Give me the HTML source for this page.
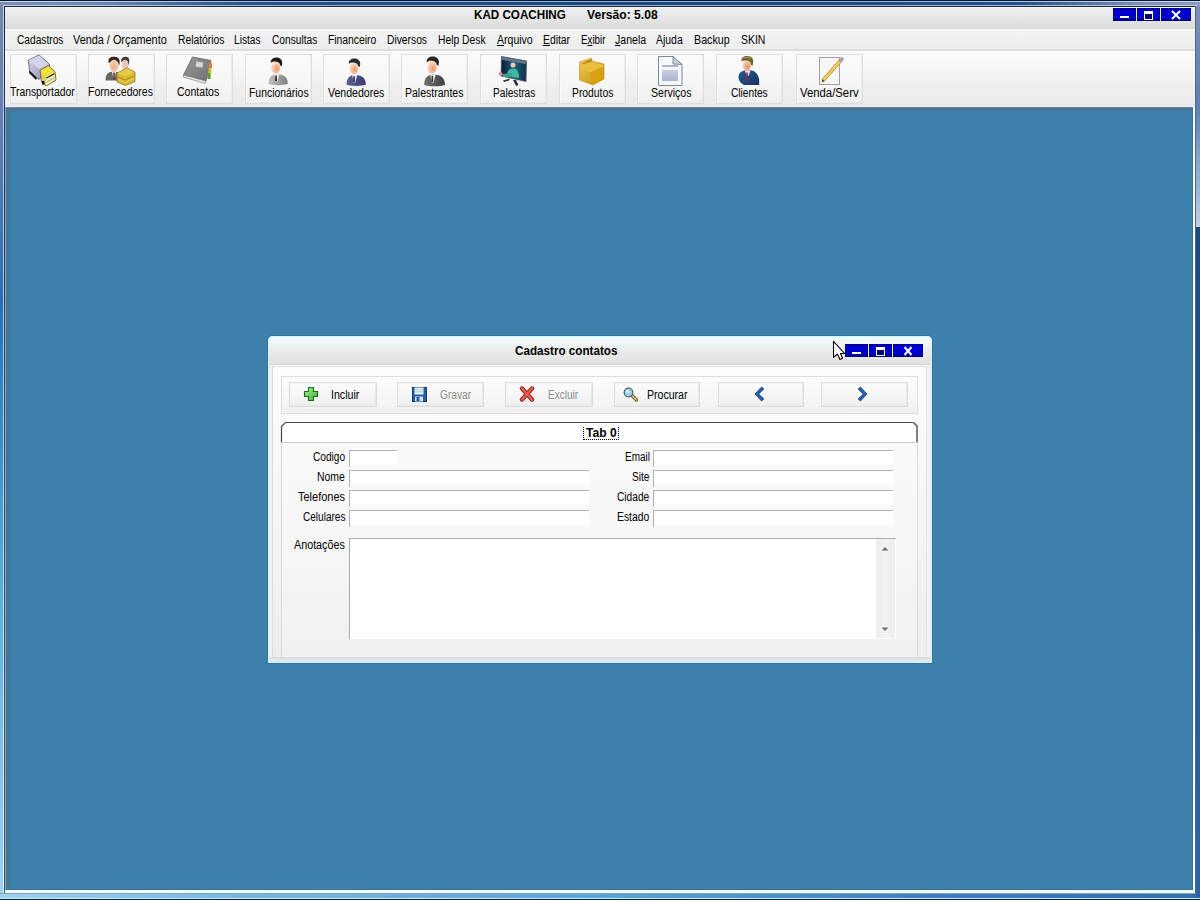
<!DOCTYPE html>
<html><head><meta charset="utf-8">
<style>
*{margin:0;padding:0;box-sizing:border-box}
html,body{width:1200px;height:900px;overflow:hidden;background:#3d80ac;font-family:"Liberation Sans",sans-serif;color:#000}
.a{position:absolute}
.t{position:absolute;white-space:nowrap;font-size:12px;line-height:12px;transform-origin:0 0}
.b{font-weight:bold}
</style></head><body>

<!-- outer window frame -->
<div class="a" style="left:0;top:0;width:1200px;height:900px;background:linear-gradient(90deg,#7d90b0 0,#6f88b0 8%,#2a5488 20%,#1e4878 50%,#24508a 85%,#7d90b0 95%,#8aa0c0 100%)"></div>
<div class="a" style="left:0;top:0;width:1200px;height:1px;background:#0a1a36"></div>
<div class="a" style="left:0;top:1px;width:1200px;height:1px;background:linear-gradient(90deg,#c8d8ee,#90b0d8 30%,#90b0d8 70%,#c8d8ee)"></div>
<div class="a" style="left:3px;top:5px;width:1194px;height:1px;background:linear-gradient(90deg,#c0d0e8,#90b0d8 30%,#90b0d8 70%,#c0d0e8)"></div>
<div class="a" style="left:4px;top:6px;width:1192px;height:1px;background:#1a2838"></div>
<!-- left frame -->
<div class="a" style="left:0;top:6px;width:3px;height:888px;background:linear-gradient(180deg,#7a88a8 0,#6a80b0 12%,#2a70b0 33%,#4090c8 50%,#60b0d8 67%,#90c8f0 92%,#a0d0f0 100%)"></div>
<div class="a" style="left:3px;top:6px;width:1px;height:888px;background:linear-gradient(180deg,#c0d0e8,#a0c8f0 33%,#b0e0f8 67%,#e0f8ff)"></div>
<div class="a" style="left:4px;top:6px;width:1px;height:888px;background:linear-gradient(180deg,#1a2a44,#204060 33%,#305870 67%,#405060)"></div>
<!-- right frame -->
<div class="a" style="left:1195px;top:6px;width:1px;height:888px;background:#586878"></div>
<div class="a" style="left:1196px;top:6px;width:4px;height:221px;background:linear-gradient(180deg,#7a90b8,#5a80b8 45%,#a0b8d8 85%,#c0d0e0)"></div>
<div class="a" style="left:1196px;top:227px;width:4px;height:673px;background:linear-gradient(180deg,#1a4a80,#2a64a8)"></div>
<!-- bottom frame -->
<div class="a" style="left:0;top:893px;width:1196px;height:1px;background:#8aa0b8"></div>
<div class="a" style="left:0;top:894px;width:1196px;height:4px;background:linear-gradient(90deg,#a0d0f0,#78b8e0 20%,#5aa4d8 50%,#3a7cc0 80%,#3070b0)"></div>
<div class="a" style="left:0;top:898px;width:1200px;height:1px;background:#c8ecff"></div>
<div class="a" style="left:0;top:899px;width:1200px;height:1px;background:#0a2030"></div>

<!-- title bar -->
<div class="a" style="left:5px;top:7px;width:1190px;height:22px;background:linear-gradient(180deg,#f8faff 0,#eeeeee 8%,#e6e6e6 50%,#dcdcdc 90%,#dcdcdc 100%)"></div>

<!-- menu bar -->
<div class="a" style="left:5px;top:29px;width:1190px;height:20px;background:linear-gradient(180deg,#f6f6f6,#f2f2f2 15%,#eeeeee)"></div>
<div class="a" style="left:5px;top:49px;width:1190px;height:2px;background:#dcdcdc"></div>

<!-- toolbar -->
<div class="a" style="left:5px;top:51px;width:1190px;height:53px;background:linear-gradient(180deg,#fbfbfb,#f6f6f6 35%,#eeeeee 70%,#ececec)"></div>
<div class="a" style="left:5px;top:104px;width:1190px;height:1px;background:#e8e8ea"></div>
<div class="a" style="left:5px;top:105px;width:1190px;height:2px;background:#ebebf5"></div>

<!-- MDI client -->
<div class="a" style="left:5px;top:107px;width:1188px;height:1px;background:#7088a0"></div>
<div class="a" style="left:5px;top:108px;width:1188px;height:1px;background:#50708a"></div>
<div class="a" style="left:6px;top:109px;width:1187px;height:781px;background:#3d80ac"></div>
<div class="a" style="left:6px;top:109px;width:1187px;height:3px;background:linear-gradient(180deg,#4a7090,rgba(61,128,172,0))"></div>
<div class="a" style="left:6px;top:109px;width:5px;height:781px;background:linear-gradient(90deg,#487090,rgba(58,128,176,0))"></div>
<div class="a" style="left:5px;top:107px;width:1px;height:786px;background:#88a8c0"></div>
<div class="a" style="left:1192px;top:109px;width:1px;height:781px;background:#4a6a88"></div>
<div class="a" style="left:1193px;top:107px;width:2px;height:786px;background:#e8ffff"></div>
<div class="a" style="left:6px;top:889px;width:1187px;height:1px;background:#4a6a88"></div>
<div class="a" style="left:5px;top:890px;width:1190px;height:3px;background:#e8ffff"></div>

<div class="a" style="left:10px;top:54px;width:67px;height:50px;border:1px solid #dedede;background:linear-gradient(180deg,#fbfbfb,#f6f6f6 60%,#f0f0f0)"></div>
<div class="a" style="left:11px;top:55px;width:65px;height:48px;border:1px solid #f8f8f8;border-right-color:#ececec;border-bottom-color:#ececec"></div>
<div class="a" style="left:88px;top:54px;width:67px;height:50px;border:1px solid #dedede;background:linear-gradient(180deg,#fbfbfb,#f6f6f6 60%,#f0f0f0)"></div>
<div class="a" style="left:89px;top:55px;width:65px;height:48px;border:1px solid #f8f8f8;border-right-color:#ececec;border-bottom-color:#ececec"></div>
<div class="a" style="left:166px;top:54px;width:67px;height:50px;border:1px solid #dedede;background:linear-gradient(180deg,#fbfbfb,#f6f6f6 60%,#f0f0f0)"></div>
<div class="a" style="left:167px;top:55px;width:65px;height:48px;border:1px solid #f8f8f8;border-right-color:#ececec;border-bottom-color:#ececec"></div>
<div class="a" style="left:245px;top:54px;width:67px;height:50px;border:1px solid #dedede;background:linear-gradient(180deg,#fbfbfb,#f6f6f6 60%,#f0f0f0)"></div>
<div class="a" style="left:246px;top:55px;width:65px;height:48px;border:1px solid #f8f8f8;border-right-color:#ececec;border-bottom-color:#ececec"></div>
<div class="a" style="left:323px;top:54px;width:67px;height:50px;border:1px solid #dedede;background:linear-gradient(180deg,#fbfbfb,#f6f6f6 60%,#f0f0f0)"></div>
<div class="a" style="left:324px;top:55px;width:65px;height:48px;border:1px solid #f8f8f8;border-right-color:#ececec;border-bottom-color:#ececec"></div>
<div class="a" style="left:401px;top:54px;width:67px;height:50px;border:1px solid #dedede;background:linear-gradient(180deg,#fbfbfb,#f6f6f6 60%,#f0f0f0)"></div>
<div class="a" style="left:402px;top:55px;width:65px;height:48px;border:1px solid #f8f8f8;border-right-color:#ececec;border-bottom-color:#ececec"></div>
<div class="a" style="left:480px;top:54px;width:67px;height:50px;border:1px solid #dedede;background:linear-gradient(180deg,#fbfbfb,#f6f6f6 60%,#f0f0f0)"></div>
<div class="a" style="left:481px;top:55px;width:65px;height:48px;border:1px solid #f8f8f8;border-right-color:#ececec;border-bottom-color:#ececec"></div>
<div class="a" style="left:559px;top:54px;width:67px;height:50px;border:1px solid #dedede;background:linear-gradient(180deg,#fbfbfb,#f6f6f6 60%,#f0f0f0)"></div>
<div class="a" style="left:560px;top:55px;width:65px;height:48px;border:1px solid #f8f8f8;border-right-color:#ececec;border-bottom-color:#ececec"></div>
<div class="a" style="left:637px;top:54px;width:67px;height:50px;border:1px solid #dedede;background:linear-gradient(180deg,#fbfbfb,#f6f6f6 60%,#f0f0f0)"></div>
<div class="a" style="left:638px;top:55px;width:65px;height:48px;border:1px solid #f8f8f8;border-right-color:#ececec;border-bottom-color:#ececec"></div>
<div class="a" style="left:716px;top:54px;width:67px;height:50px;border:1px solid #dedede;background:linear-gradient(180deg,#fbfbfb,#f6f6f6 60%,#f0f0f0)"></div>
<div class="a" style="left:717px;top:55px;width:65px;height:48px;border:1px solid #f8f8f8;border-right-color:#ececec;border-bottom-color:#ececec"></div>
<div class="a" style="left:796px;top:54px;width:67px;height:50px;border:1px solid #dedede;background:linear-gradient(180deg,#fbfbfb,#f6f6f6 60%,#f0f0f0)"></div>
<div class="a" style="left:797px;top:55px;width:65px;height:48px;border:1px solid #f8f8f8;border-right-color:#ececec;border-bottom-color:#ececec"></div>
<svg class="a" style="left:24px;top:52px" width="40" height="36" viewBox="0 0 40 36"><defs>
<linearGradient id="gbox" x1="0" y1="0" x2="1" y2="1"><stop offset="0" stop-color="#d8d8f0"/><stop offset="1" stop-color="#9090b0"/></linearGradient>
<linearGradient id="gyel" x1="0" y1="0" x2="0" y2="1"><stop offset="0" stop-color="#f0e040"/><stop offset="1" stop-color="#e8d890"/></linearGradient>
<linearGradient id="gbook" x1="0" y1="0" x2="1" y2="1"><stop offset="0" stop-color="#9a9a9a"/><stop offset="1" stop-color="#707070"/></linearGradient>
<radialGradient id="gface" cx="0.5" cy="0.6" r="0.6"><stop offset="0" stop-color="#f8a878"/><stop offset="1" stop-color="#f0d8c0"/></radialGradient>
<linearGradient id="gmon" x1="0" y1="0" x2="1" y2="0"><stop offset="0" stop-color="#081830"/><stop offset="0.5" stop-color="#206080"/><stop offset="1" stop-color="#103048"/></linearGradient>
<linearGradient id="gprod" x1="0" y1="0" x2="1" y2="1"><stop offset="0" stop-color="#f0c850"/><stop offset="1" stop-color="#c09010"/></linearGradient>
<linearGradient id="gdoc" x1="0" y1="0" x2="0" y2="1"><stop offset="0" stop-color="#c8d0e0"/><stop offset="1" stop-color="#a8b4d0"/></linearGradient>
</defs>
<polygon points="4.5,8 15,3 25.5,12 25.5,16 15,27.5 5.5,19.5" fill="url(#gbox)" stroke="#505868" stroke-width="0.8"/>
<polygon points="5,8.2 15,3.6 24.8,12.2 15,17" fill="#d4d4ea"/>
<polygon points="5.5,18.5 13,26 12,28 5,21" fill="#181818"/>
<polygon points="16,18.5 24.5,13.5 31,20 32,28 22,34 17.5,30" fill="#e0d060" stroke="#605010" stroke-width="0.8"/>
<polygon points="16.6,18.6 24.5,14.2 30.4,20 21.5,25" fill="#f0e438"/>
<polygon points="21.5,25 30.5,20.2 31.4,27.6 22,33.4" fill="#f2eeb8"/>
<line x1="22" y1="26.2" x2="30.6" y2="21.6" stroke="#303020" stroke-width="1.3"/>
<line x1="22.5" y1="30" x2="31" y2="25.5" stroke="#a8a060" stroke-width="0.9"/>
<rect x="18" y="29" width="2.5" height="3.5" fill="#101010"/></svg>
<svg class="a" style="left:100px;top:52px" width="40" height="36" viewBox="0 0 40 36"><defs>
<linearGradient id="gbox" x1="0" y1="0" x2="1" y2="1"><stop offset="0" stop-color="#d8d8f0"/><stop offset="1" stop-color="#9090b0"/></linearGradient>
<linearGradient id="gyel" x1="0" y1="0" x2="0" y2="1"><stop offset="0" stop-color="#f0e040"/><stop offset="1" stop-color="#e8d890"/></linearGradient>
<linearGradient id="gbook" x1="0" y1="0" x2="1" y2="1"><stop offset="0" stop-color="#9a9a9a"/><stop offset="1" stop-color="#707070"/></linearGradient>
<radialGradient id="gface" cx="0.5" cy="0.6" r="0.6"><stop offset="0" stop-color="#f8a878"/><stop offset="1" stop-color="#f0d8c0"/></radialGradient>
<linearGradient id="gmon" x1="0" y1="0" x2="1" y2="0"><stop offset="0" stop-color="#081830"/><stop offset="0.5" stop-color="#206080"/><stop offset="1" stop-color="#103048"/></linearGradient>
<linearGradient id="gprod" x1="0" y1="0" x2="1" y2="1"><stop offset="0" stop-color="#f0c850"/><stop offset="1" stop-color="#c09010"/></linearGradient>
<linearGradient id="gdoc" x1="0" y1="0" x2="0" y2="1"><stop offset="0" stop-color="#c8d0e0"/><stop offset="1" stop-color="#a8b4d0"/></linearGradient>
</defs>
<path d="M21,9.5 C21,5.5 24,4.8 26,4.8 C28.5,5 29.8,7 29.2,10.5 L28.6,13.5 L27.6,9.5 L22,9.5 Z" fill="#403830"/>
<ellipse cx="25" cy="12.8" rx="3.5" ry="5" fill="#e8c8b8"/>
<rect x="23.5" y="17" width="3" height="4" fill="#f0e0e0"/>
<rect x="24.5" y="17.5" width="1.2" height="3" fill="#801830"/>
<path d="M8.5,10.5 C8,6 11,4.5 14.5,4.8 C18,5 20.2,7 19.6,11 L19,14.5 L18,10.2 C16,9.2 12,9.2 9,10.8 Z" fill="#302820"/>
<ellipse cx="14" cy="13.8" rx="4.6" ry="6" fill="url(#gface)"/>
<path d="M5.5,28.5 C5.5,22.5 8,19.8 12,19.8 L16,19.8 C18.5,20.2 19.5,22 19.5,24 L18.5,28.5 Z" fill="#6a6a62"/>
<polygon points="12,19.8 16,19.8 14.8,26 13.2,26" fill="#f4f4f0"/>
<rect x="13.3" y="20.5" width="1.4" height="7" fill="#601020"/>
<polygon points="17,21 27,16 35,20 35,29.5 25.5,33.5 17,30" fill="#d8b830" stroke="#8a6a10" stroke-width="0.7"/>
<polygon points="17.5,21.2 27,16.6 34.4,20.2 25,24.6" fill="#e8cc48"/>
<polyline points="18,25 25,28 34.5,24" fill="none" stroke="#a88010" stroke-width="0.8"/>
<polyline points="18,27.5 25,30.5 34.5,26.5" fill="none" stroke="#f0d860" stroke-width="0.8"/></svg>
<svg class="a" style="left:178px;top:52px" width="40" height="36" viewBox="0 0 40 36"><defs>
<linearGradient id="gbox" x1="0" y1="0" x2="1" y2="1"><stop offset="0" stop-color="#d8d8f0"/><stop offset="1" stop-color="#9090b0"/></linearGradient>
<linearGradient id="gyel" x1="0" y1="0" x2="0" y2="1"><stop offset="0" stop-color="#f0e040"/><stop offset="1" stop-color="#e8d890"/></linearGradient>
<linearGradient id="gbook" x1="0" y1="0" x2="1" y2="1"><stop offset="0" stop-color="#9a9a9a"/><stop offset="1" stop-color="#707070"/></linearGradient>
<radialGradient id="gface" cx="0.5" cy="0.6" r="0.6"><stop offset="0" stop-color="#f8a878"/><stop offset="1" stop-color="#f0d8c0"/></radialGradient>
<linearGradient id="gmon" x1="0" y1="0" x2="1" y2="0"><stop offset="0" stop-color="#081830"/><stop offset="0.5" stop-color="#206080"/><stop offset="1" stop-color="#103048"/></linearGradient>
<linearGradient id="gprod" x1="0" y1="0" x2="1" y2="1"><stop offset="0" stop-color="#f0c850"/><stop offset="1" stop-color="#c09010"/></linearGradient>
<linearGradient id="gdoc" x1="0" y1="0" x2="0" y2="1"><stop offset="0" stop-color="#c8d0e0"/><stop offset="1" stop-color="#a8b4d0"/></linearGradient>
</defs>
<polygon points="14.5,5 33,8.5 28,29 5.5,23" fill="url(#gbook)" stroke="#606060" stroke-width="0.8"/>
<polygon points="5.5,23 28,29 27.5,31.5 5,25" fill="#e8e8e8" stroke="#707070" stroke-width="0.6"/>
<rect x="18" y="10" width="7" height="5" fill="#d8d8d0" transform="rotate(10 21 12)"/>
<rect x="31" y="11" width="3" height="5" fill="#e08040"/>
<rect x="30.5" y="16" width="3" height="5" fill="#d8c030"/>
<rect x="29.5" y="21" width="3" height="6" fill="#50a030"/></svg>
<svg class="a" style="left:258px;top:52px" width="40" height="36" viewBox="0 0 40 36"><defs><radialGradient id="p1f" cx="0.6" cy="0.65" r="0.65"><stop offset="0" stop-color="#f09868"/><stop offset="0.6" stop-color="#f4c8a8"/><stop offset="1" stop-color="#f8ece0"/></radialGradient>
<linearGradient id="p1s" x1="0" y1="0" x2="1" y2="0"><stop offset="0" stop-color="#c0c0c0"/><stop offset="1" stop-color="#808080"/></linearGradient></defs>
<g transform="translate(0,0) scale(1)">
<path d="M10.5,32 C10.5,25.5 13.5,22.2 19,22.2 C25.5,22.2 29.8,25 29.8,32 C25,33.5 15,33.5 10.5,32 Z" fill="url(#p1s)"/>
<polygon points="16.2,22.2 21.2,22.2 19.2,30 17.6,30" fill="#f0f0f0"/>
<polygon points="17.4,23.4 18.8,23.4 18.9,29.5 17.2,29" fill="#101010"/>
<ellipse cx="17.8" cy="15.2" rx="4.6" ry="6.3" fill="url(#p1f)"/>
<path d="M12.8,11 C12.6,7 15.5,5.6 18.6,5.6 C22.2,5.6 24.4,8 24.2,11.5 L23.6,14.5 L22.2,13.2 C21.8,10.8 20,9.6 17,9.6 C15,9.6 13.8,10.2 12.8,11 Z" fill="#1a1a1a"/>
</g></svg>
<svg class="a" style="left:336px;top:52px" width="40" height="36" viewBox="0 0 40 36"><defs><radialGradient id="p2f" cx="0.6" cy="0.65" r="0.65"><stop offset="0" stop-color="#f09868"/><stop offset="0.6" stop-color="#f4c8a8"/><stop offset="1" stop-color="#f8ece0"/></radialGradient>
<linearGradient id="p2s" x1="0" y1="0" x2="1" y2="0"><stop offset="0" stop-color="#5a6098"/><stop offset="1" stop-color="#383e70"/></linearGradient></defs>
<g transform="translate(0,0.8) scale(1)">
<path d="M10.5,32 C10.5,25.5 13.5,22.2 19,22.2 C25.5,22.2 29.8,25 29.8,32 C25,33.5 15,33.5 10.5,32 Z" fill="url(#p2s)"/>
<polygon points="16.2,22.2 21.2,22.2 19.2,30 17.6,30" fill="#e8e8f0"/>
<polygon points="17.4,23.4 18.8,23.4 18.9,29.5 17.2,29" fill="#1a2048"/>
<ellipse cx="17.8" cy="15.2" rx="4.6" ry="6.3" fill="url(#p2f)"/>
<path d="M12.8,11 C12.6,7 15.5,5.6 18.6,5.6 C22.2,5.6 24.4,8 24.2,11.5 L23.6,14.5 L22.2,13.2 C21.8,10.8 20,9.6 17,9.6 C15,9.6 13.8,10.2 12.8,11 Z" fill="#2a2a2e"/>
</g></svg>
<svg class="a" style="left:414px;top:52px" width="40" height="36" viewBox="0 0 40 36"><defs><radialGradient id="p3f" cx="0.6" cy="0.65" r="0.65"><stop offset="0" stop-color="#f09868"/><stop offset="0.6" stop-color="#f4c8a8"/><stop offset="1" stop-color="#f8ece0"/></radialGradient>
<linearGradient id="p3s" x1="0" y1="0" x2="1" y2="0"><stop offset="0" stop-color="#707070"/><stop offset="1" stop-color="#404040"/></linearGradient></defs>
<g transform="translate(-1.2,-1.6) scale(1.08)">
<path d="M10.5,32 C10.5,25.5 13.5,22.2 19,22.2 C25.5,22.2 29.8,25 29.8,32 C25,33.5 15,33.5 10.5,32 Z" fill="url(#p3s)"/>
<polygon points="16.2,22.2 21.2,22.2 19.2,30 17.6,30" fill="#f0f0f0"/>
<polygon points="17.4,23.4 18.8,23.4 18.9,29.5 17.2,29" fill="#303030"/>
<ellipse cx="17.8" cy="15.2" rx="4.6" ry="6.3" fill="url(#p3f)"/>
<path d="M12.8,11 C12.6,7 15.5,5.6 18.6,5.6 C22.2,5.6 24.4,8 24.2,11.5 L23.6,14.5 L22.2,13.2 C21.8,10.8 20,9.6 17,9.6 C15,9.6 13.8,10.2 12.8,11 Z" fill="#262626"/>
</g></svg>
<svg class="a" style="left:493px;top:52px" width="40" height="36" viewBox="0 0 40 36"><defs>
<linearGradient id="gbox" x1="0" y1="0" x2="1" y2="1"><stop offset="0" stop-color="#d8d8f0"/><stop offset="1" stop-color="#9090b0"/></linearGradient>
<linearGradient id="gyel" x1="0" y1="0" x2="0" y2="1"><stop offset="0" stop-color="#f0e040"/><stop offset="1" stop-color="#e8d890"/></linearGradient>
<linearGradient id="gbook" x1="0" y1="0" x2="1" y2="1"><stop offset="0" stop-color="#9a9a9a"/><stop offset="1" stop-color="#707070"/></linearGradient>
<radialGradient id="gface" cx="0.5" cy="0.6" r="0.6"><stop offset="0" stop-color="#f8a878"/><stop offset="1" stop-color="#f0d8c0"/></radialGradient>
<linearGradient id="gmon" x1="0" y1="0" x2="1" y2="0"><stop offset="0" stop-color="#081830"/><stop offset="0.5" stop-color="#206080"/><stop offset="1" stop-color="#103048"/></linearGradient>
<linearGradient id="gprod" x1="0" y1="0" x2="1" y2="1"><stop offset="0" stop-color="#f0c850"/><stop offset="1" stop-color="#c09010"/></linearGradient>
<linearGradient id="gdoc" x1="0" y1="0" x2="0" y2="1"><stop offset="0" stop-color="#c8d0e0"/><stop offset="1" stop-color="#a8b4d0"/></linearGradient>
</defs>
<polygon points="8.5,4.5 33.5,9 33,29.5 8,24" fill="url(#gmon)" stroke="#505860" stroke-width="0.8"/>
<polygon points="9,5 33,9.5 33,12 9,8" fill="#607888"/>
<ellipse cx="20" cy="13" rx="2.5" ry="2.5" fill="#f0c8a8"/>
<path d="M14,24 C14,19 16,16.5 20,16.5 C24,16.5 26,19 26,26 L19,25 Z" fill="#40b8a0"/>
<path d="M9,22 L19,21 L19,25 L10,25 Z" fill="#30a090"/>
<ellipse cx="7.5" cy="22" rx="2" ry="2" fill="#e090a0"/>
<polygon points="10,28.5 17,26.5 16,28.5 11,30" fill="#303030"/>
<polygon points="20,28 23,28 25.5,33 23,34" fill="#303030"/></svg>
<svg class="a" style="left:572px;top:52px" width="40" height="36" viewBox="0 0 40 36"><defs>
<linearGradient id="gbox" x1="0" y1="0" x2="1" y2="1"><stop offset="0" stop-color="#d8d8f0"/><stop offset="1" stop-color="#9090b0"/></linearGradient>
<linearGradient id="gyel" x1="0" y1="0" x2="0" y2="1"><stop offset="0" stop-color="#f0e040"/><stop offset="1" stop-color="#e8d890"/></linearGradient>
<linearGradient id="gbook" x1="0" y1="0" x2="1" y2="1"><stop offset="0" stop-color="#9a9a9a"/><stop offset="1" stop-color="#707070"/></linearGradient>
<radialGradient id="gface" cx="0.5" cy="0.6" r="0.6"><stop offset="0" stop-color="#f8a878"/><stop offset="1" stop-color="#f0d8c0"/></radialGradient>
<linearGradient id="gmon" x1="0" y1="0" x2="1" y2="0"><stop offset="0" stop-color="#081830"/><stop offset="0.5" stop-color="#206080"/><stop offset="1" stop-color="#103048"/></linearGradient>
<linearGradient id="gprod" x1="0" y1="0" x2="1" y2="1"><stop offset="0" stop-color="#f0c850"/><stop offset="1" stop-color="#c09010"/></linearGradient>
<linearGradient id="gdoc" x1="0" y1="0" x2="0" y2="1"><stop offset="0" stop-color="#c8d0e0"/><stop offset="1" stop-color="#a8b4d0"/></linearGradient>
</defs>
<polygon points="7.5,10 19.5,6 20,9 32,12 32,27 21,33 7.5,28" fill="url(#gprod)" stroke="#c09020" stroke-width="0.6"/>
<polygon points="9.5,12 19.5,7 19.5,12 13.5,16" fill="#b08010"/>
<polygon points="8,17 19,20 31,15 31,13 20,9.5 8,13" fill="#e8c040"/>
<polygon points="19,20 31,15 31,27 21,33" fill="#d8a010"/></svg>
<svg class="a" style="left:650px;top:52px" width="40" height="36" viewBox="0 0 40 36"><defs>
<linearGradient id="gbox" x1="0" y1="0" x2="1" y2="1"><stop offset="0" stop-color="#d8d8f0"/><stop offset="1" stop-color="#9090b0"/></linearGradient>
<linearGradient id="gyel" x1="0" y1="0" x2="0" y2="1"><stop offset="0" stop-color="#f0e040"/><stop offset="1" stop-color="#e8d890"/></linearGradient>
<linearGradient id="gbook" x1="0" y1="0" x2="1" y2="1"><stop offset="0" stop-color="#9a9a9a"/><stop offset="1" stop-color="#707070"/></linearGradient>
<radialGradient id="gface" cx="0.5" cy="0.6" r="0.6"><stop offset="0" stop-color="#f8a878"/><stop offset="1" stop-color="#f0d8c0"/></radialGradient>
<linearGradient id="gmon" x1="0" y1="0" x2="1" y2="0"><stop offset="0" stop-color="#081830"/><stop offset="0.5" stop-color="#206080"/><stop offset="1" stop-color="#103048"/></linearGradient>
<linearGradient id="gprod" x1="0" y1="0" x2="1" y2="1"><stop offset="0" stop-color="#f0c850"/><stop offset="1" stop-color="#c09010"/></linearGradient>
<linearGradient id="gdoc" x1="0" y1="0" x2="0" y2="1"><stop offset="0" stop-color="#c8d0e0"/><stop offset="1" stop-color="#a8b4d0"/></linearGradient>
</defs>
<polygon points="8.5,4.5 23,4.5 32,12.5 32,33.5 8.5,33.5" fill="#f4f8ff" stroke="#808890" stroke-width="1"/>
<polygon points="23,4.5 23,12 32,12.5" fill="#c8d0d8" stroke="#707880" stroke-width="0.8"/>
<rect x="12" y="13" width="16" height="2" fill="#b0b8c8"/>
<rect x="12" y="18" width="16" height="11" fill="url(#gdoc)"/></svg>
<svg class="a" style="left:729px;top:52px" width="40" height="36" viewBox="0 0 40 36"><defs>
<linearGradient id="gbox" x1="0" y1="0" x2="1" y2="1"><stop offset="0" stop-color="#d8d8f0"/><stop offset="1" stop-color="#9090b0"/></linearGradient>
<linearGradient id="gyel" x1="0" y1="0" x2="0" y2="1"><stop offset="0" stop-color="#f0e040"/><stop offset="1" stop-color="#e8d890"/></linearGradient>
<linearGradient id="gbook" x1="0" y1="0" x2="1" y2="1"><stop offset="0" stop-color="#9a9a9a"/><stop offset="1" stop-color="#707070"/></linearGradient>
<radialGradient id="gface" cx="0.5" cy="0.6" r="0.6"><stop offset="0" stop-color="#f8a878"/><stop offset="1" stop-color="#f0d8c0"/></radialGradient>
<linearGradient id="gmon" x1="0" y1="0" x2="1" y2="0"><stop offset="0" stop-color="#081830"/><stop offset="0.5" stop-color="#206080"/><stop offset="1" stop-color="#103048"/></linearGradient>
<linearGradient id="gprod" x1="0" y1="0" x2="1" y2="1"><stop offset="0" stop-color="#f0c850"/><stop offset="1" stop-color="#c09010"/></linearGradient>
<linearGradient id="gdoc" x1="0" y1="0" x2="0" y2="1"><stop offset="0" stop-color="#c8d0e0"/><stop offset="1" stop-color="#a8b4d0"/></linearGradient>
</defs><defs><radialGradient id="gcf" cx="0.6" cy="0.65" r="0.65"><stop offset="0" stop-color="#e89060"/><stop offset="0.6" stop-color="#f0c0a0"/><stop offset="1" stop-color="#f8e8d8"/></radialGradient>
<linearGradient id="gcs" x1="0" y1="0" x2="1" y2="1"><stop offset="0" stop-color="#2a5a98"/><stop offset="1" stop-color="#143060"/></linearGradient></defs>
<path d="M9.5,25 C9.5,20.5 13.5,18.2 17,18.5 L22,18.2 C26.5,19 29.5,22.5 30.2,28 L30.2,33 L15,33 C12,31.5 9.5,28.5 9.5,25 Z" fill="url(#gcs)"/>
<polygon points="16,18.6 21.6,18.4 19.5,24 17.5,24" fill="#f0e4ec"/>
<polygon points="17.2,20.5 18.8,20.5 19.4,29 17.4,29.5" fill="#902838"/>
<ellipse cx="17.8" cy="13" rx="4.5" ry="5.8" fill="url(#gcf)"/>
<path d="M12.4,9.5 C12,5.5 15,3.8 18.5,4 C22.5,4.2 24.6,6.5 24.2,10.5 L23.5,14 L22,12.8 C21.8,10 20,8.6 17,8.6 C15,8.6 13.6,9 12.4,9.5 Z" fill="#706434"/>
<path d="M14,6.5 C16,5 20,5 22,6.5" stroke="#a89858" stroke-width="1" fill="none"/></svg>
<svg class="a" style="left:809px;top:52px" width="40" height="36" viewBox="0 0 40 36"><defs>
<linearGradient id="gbox" x1="0" y1="0" x2="1" y2="1"><stop offset="0" stop-color="#d8d8f0"/><stop offset="1" stop-color="#9090b0"/></linearGradient>
<linearGradient id="gyel" x1="0" y1="0" x2="0" y2="1"><stop offset="0" stop-color="#f0e040"/><stop offset="1" stop-color="#e8d890"/></linearGradient>
<linearGradient id="gbook" x1="0" y1="0" x2="1" y2="1"><stop offset="0" stop-color="#9a9a9a"/><stop offset="1" stop-color="#707070"/></linearGradient>
<radialGradient id="gface" cx="0.5" cy="0.6" r="0.6"><stop offset="0" stop-color="#f8a878"/><stop offset="1" stop-color="#f0d8c0"/></radialGradient>
<linearGradient id="gmon" x1="0" y1="0" x2="1" y2="0"><stop offset="0" stop-color="#081830"/><stop offset="0.5" stop-color="#206080"/><stop offset="1" stop-color="#103048"/></linearGradient>
<linearGradient id="gprod" x1="0" y1="0" x2="1" y2="1"><stop offset="0" stop-color="#f0c850"/><stop offset="1" stop-color="#c09010"/></linearGradient>
<linearGradient id="gdoc" x1="0" y1="0" x2="0" y2="1"><stop offset="0" stop-color="#c8d0e0"/><stop offset="1" stop-color="#a8b4d0"/></linearGradient>
</defs>
<rect x="10.5" y="5.5" width="20" height="27" fill="#f6f6f8" stroke="#a0a0a0" stroke-width="1"/>
<line x1="14.5" y1="28" x2="32.5" y2="7.5" stroke="#c09030" stroke-width="3.6"/>
<line x1="14.5" y1="28" x2="32.5" y2="7.5" stroke="#f0d058" stroke-width="2.2"/>
<line x1="30.5" y1="9.8" x2="34" y2="5.8" stroke="#b0a0a8" stroke-width="3.6"/>
<polygon points="13.2,27 15.8,29.2 12.8,30.5" fill="#504030"/></svg>
<div class="a" style="left:1113px;top:8px;width:23px;height:13px;background:linear-gradient(180deg,#0000a8,#0000d8 30%,#0000c8 70%,#000090);box-shadow:inset 0 0 0 1px rgba(0,0,100,0.5)"><div class="a" style="left:7px;top:8px;width:9px;height:2px;background:#fff"></div></div>
<div class="a" style="left:1137px;top:8px;width:23px;height:13px;background:linear-gradient(180deg,#0000a8,#0000d8 30%,#0000c8 70%,#000090);box-shadow:inset 0 0 0 1px rgba(0,0,100,0.5)"><div class="a" style="left:7px;top:3px;width:9px;height:9px;border:1px solid #fff;border-top-width:3px;background:#000070"></div></div>
<div class="a" style="left:1161px;top:8px;width:30px;height:13px;background:linear-gradient(180deg,#0000a8,#0000d8 30%,#0000c8 70%,#000090);box-shadow:inset 0 0 0 1px rgba(0,0,100,0.5)"><svg class="a" style="left:10px;top:2px" width="10" height="10" viewBox="0 0 10 10"><path d="M1,1 L9,9 M9,1 L1,9" stroke="#fff" stroke-width="2"/></svg></div>
<div class="a" style="left:267px;top:335px;width:666px;height:329px;border-radius:5px 5px 1px 1px;background:rgba(30,60,90,0.2)"></div>
<div class="a" style="left:268px;top:336px;width:664px;height:327px;border-radius:4px 4px 0 0;background:#eef0f0;border:1px solid #d0f4ff"></div>
<div class="a" style="left:269px;top:337px;width:662px;height:28px;border-radius:3px 3px 0 0;background:linear-gradient(180deg,#e8ffff 0,#f0f8f8 12%,#ececec 45%,#e2e2e2 90%,#dcdcdc 100%)"></div>
<div class="a" style="left:272px;top:364px;width:656px;height:1px;background:#d4d4d4"></div>
<div class="a" style="left:272px;top:365px;width:656px;height:1px;background:#fafafa"></div>
<div class="a" style="left:269px;top:366px;width:3px;height:291px;background:linear-gradient(90deg,#e8eeee,#f4f4f4)"></div>
<div class="a" style="left:272px;top:366px;width:1px;height:291px;background:#dcdcdc"></div>
<div class="a" style="left:926px;top:366px;width:1px;height:291px;background:#e4e4e4"></div>
<div class="a" style="left:927px;top:366px;width:4px;height:291px;background:linear-gradient(90deg,#f4f4f4,#e8eeee)"></div>
<div class="a" style="left:272px;top:366px;width:655px;height:1px;background:#dcdcdc"></div>
<div class="a" style="left:273px;top:367px;width:653px;height:290px;background:linear-gradient(180deg,#fdfdfd 0,#f8f8f8 30%,#f2f2f2 70%,#eeeeee 100%)"></div>
<div class="a" style="left:269px;top:657px;width:662px;height:2px;background:#e0dcdc"></div>
<div class="a" style="left:269px;top:659px;width:662px;height:3px;background:linear-gradient(180deg,#e4e8ec,#d8e4ec)"></div>
<div class="a" style="left:268px;top:661px;width:664px;height:2px;background:#d0f0ff"></div>
<div class="a" style="left:281px;top:376px;width:637px;height:38px;border:1px solid #dcdcdc;background:linear-gradient(180deg,#fcfcfc,#f6f6f6 60%,#f0f0f0)"></div>
<div class="a" style="left:289px;top:382px;width:88px;height:25px;border:1px solid #dcdcdc;background:linear-gradient(180deg,#fcfcfc,#f6f6f6 50%,#eeeeee)"></div>
<div class="a" style="left:290px;top:383px;width:86px;height:23px;border:1px solid #f6f6f6;border-bottom-color:#e8e8e8;border-right-color:#e8e8e8"></div>
<div class="a" style="left:397px;top:382px;width:87px;height:25px;border:1px solid #dcdcdc;background:linear-gradient(180deg,#fcfcfc,#f6f6f6 50%,#eeeeee)"></div>
<div class="a" style="left:398px;top:383px;width:85px;height:23px;border:1px solid #f6f6f6;border-bottom-color:#e8e8e8;border-right-color:#e8e8e8"></div>
<div class="a" style="left:505px;top:382px;width:88px;height:25px;border:1px solid #dcdcdc;background:linear-gradient(180deg,#fcfcfc,#f6f6f6 50%,#eeeeee)"></div>
<div class="a" style="left:506px;top:383px;width:86px;height:23px;border:1px solid #f6f6f6;border-bottom-color:#e8e8e8;border-right-color:#e8e8e8"></div>
<div class="a" style="left:614px;top:382px;width:86px;height:25px;border:1px solid #dcdcdc;background:linear-gradient(180deg,#fcfcfc,#f6f6f6 50%,#eeeeee)"></div>
<div class="a" style="left:615px;top:383px;width:84px;height:23px;border:1px solid #f6f6f6;border-bottom-color:#e8e8e8;border-right-color:#e8e8e8"></div>
<div class="a" style="left:718px;top:382px;width:86px;height:25px;border:1px solid #dcdcdc;background:linear-gradient(180deg,#fcfcfc,#f6f6f6 50%,#eeeeee)"></div>
<div class="a" style="left:719px;top:383px;width:84px;height:23px;border:1px solid #f6f6f6;border-bottom-color:#e8e8e8;border-right-color:#e8e8e8"></div>
<div class="a" style="left:821px;top:382px;width:87px;height:25px;border:1px solid #dcdcdc;background:linear-gradient(180deg,#fcfcfc,#f6f6f6 50%,#eeeeee)"></div>
<div class="a" style="left:822px;top:383px;width:85px;height:23px;border:1px solid #f6f6f6;border-bottom-color:#e8e8e8;border-right-color:#e8e8e8"></div>
<div class="a" style="left:281px;top:442px;width:637px;height:215px;border:1px solid #d8d8d8;border-top:none;border-bottom:none;background:linear-gradient(180deg,#fafafa 0,#f6f6f6 50%,#f0f0f0 100%)"></div>
<svg class="a" style="left:280px;top:421px" width="640" height="23" viewBox="0 0 640 23">
<path d="M1.5,21.5 L1.5,5.5 L5.5,1.5 L633.5,1.5 L637,5 L637,21.5 Z" fill="#ffffff"/>
<path d="M1.5,21 L1.5,5.5 L5.5,1.5 L633.5,1.5" fill="none" stroke="#4a4a4a" stroke-width="1.2"/>
<path d="M633.5,1.5 L637,5 L637,21" fill="none" stroke="#808080" stroke-width="2"/>
<line x1="1" y1="21.5" x2="638" y2="21.5" stroke="#c8c8c8" stroke-width="1"/>
</svg>
<div class="a" style="left:583px;top:427px;width:36px;height:13px;border:1px dotted #000;border-top:none"></div>
<div class="a" style="left:349px;top:450px;width:48px;height:17px;background:linear-gradient(180deg,#ffffff 0,#ffffff 75%,#f6f6f6 100%);border-top:1px solid #b0b0b0;border-left:1px solid #b0b0b0"></div>
<div class="a" style="left:349px;top:470px;width:240px;height:17px;background:linear-gradient(180deg,#ffffff 0,#ffffff 75%,#f6f6f6 100%);border-top:1px solid #b0b0b0;border-left:1px solid #b0b0b0"></div>
<div class="a" style="left:349px;top:490px;width:240px;height:17px;background:linear-gradient(180deg,#ffffff 0,#ffffff 75%,#f6f6f6 100%);border-top:1px solid #b0b0b0;border-left:1px solid #b0b0b0"></div>
<div class="a" style="left:349px;top:510px;width:240px;height:17px;background:linear-gradient(180deg,#ffffff 0,#ffffff 75%,#f6f6f6 100%);border-top:1px solid #b0b0b0;border-left:1px solid #b0b0b0"></div>
<div class="a" style="left:653px;top:450px;width:240px;height:17px;background:linear-gradient(180deg,#ffffff 0,#ffffff 75%,#f6f6f6 100%);border-top:1px solid #b0b0b0;border-left:1px solid #b0b0b0"></div>
<div class="a" style="left:653px;top:470px;width:240px;height:17px;background:linear-gradient(180deg,#ffffff 0,#ffffff 75%,#f6f6f6 100%);border-top:1px solid #b0b0b0;border-left:1px solid #b0b0b0"></div>
<div class="a" style="left:653px;top:490px;width:240px;height:17px;background:linear-gradient(180deg,#ffffff 0,#ffffff 75%,#f6f6f6 100%);border-top:1px solid #b0b0b0;border-left:1px solid #b0b0b0"></div>
<div class="a" style="left:653px;top:510px;width:240px;height:17px;background:linear-gradient(180deg,#ffffff 0,#ffffff 75%,#f6f6f6 100%);border-top:1px solid #b0b0b0;border-left:1px solid #b0b0b0"></div>
<div class="a" style="left:349px;top:538px;width:547px;height:101px;background:#fff;border-top:1px solid #b0b0b0;border-left:1px solid #a8a8a8"></div>
<div class="a" style="left:876px;top:539px;width:19px;height:99px;background:linear-gradient(90deg,#ececec,#f2f2f2 50%,#ececec)"></div>
<svg class="a" style="left:878px;top:543px" width="14" height="10"><path d="M3.5,7.5 L7,4 L10.5,7.5 Z" fill="#707070"/></svg>
<svg class="a" style="left:878px;top:624px" width="14" height="10"><path d="M3.5,3.5 L7,7 L10.5,3.5 Z" fill="#707070"/></svg>
<div class="a" style="left:845px;top:344px;width:23px;height:13px;background:linear-gradient(180deg,#0000a8,#0000d8 30%,#0000c8 70%,#000090);box-shadow:inset 0 0 0 1px rgba(0,0,100,0.5)"><div class="a" style="left:7px;top:8px;width:9px;height:2px;background:#fff"></div></div>
<div class="a" style="left:869px;top:344px;width:23px;height:13px;background:linear-gradient(180deg,#0000a8,#0000d8 30%,#0000c8 70%,#000090);box-shadow:inset 0 0 0 1px rgba(0,0,100,0.5)"><div class="a" style="left:7px;top:3px;width:9px;height:9px;border:1px solid #fff;border-top-width:3px;background:#000070"></div></div>
<div class="a" style="left:893px;top:344px;width:30px;height:13px;background:linear-gradient(180deg,#0000a8,#0000d8 30%,#0000c8 70%,#000090);box-shadow:inset 0 0 0 1px rgba(0,0,100,0.5)"><svg class="a" style="left:10px;top:2px" width="10" height="10" viewBox="0 0 10 10"><path d="M1.5,1 L8.5,9 M8.5,1 L1.5,9" stroke="#f0f0ff" stroke-width="2.2"/></svg></div>
<svg class="a" style="left:303px;top:386px" width="16" height="16" viewBox="0 0 16 16">
<defs><linearGradient id="gplus" x1="0" y1="0" x2="1" y2="1"><stop offset="0" stop-color="#a0f090"/><stop offset="1" stop-color="#40b030"/></linearGradient></defs>
<path d="M5.5,1.5 H10.5 V5.5 H14.5 V10.5 H10.5 V14.5 H5.5 V10.5 H1.5 V5.5 H5.5 Z" fill="url(#gplus)" stroke="#1e6e1e" stroke-width="1.1"/></svg>
<svg class="a" style="left:411px;top:386px" width="16" height="16" viewBox="0 0 16 16">
<rect x="1.5" y="1.5" width="14" height="14" fill="#2a5aa8" stroke="#183870" stroke-width="1"/>
<rect x="3.5" y="1.5" width="9" height="7" fill="#e0f4f4"/>
<rect x="4" y="3.5" width="8" height="0.8" fill="#a8c0c0"/>
<rect x="4" y="5.5" width="8" height="0.8" fill="#a8c0c0"/>
<rect x="4" y="10.5" width="8" height="5" fill="#c8e0f8"/>
<rect x="5.5" y="11" width="3" height="4" fill="#3060a8"/></svg>
<svg class="a" style="left:519px;top:386px" width="16" height="16" viewBox="0 0 16 16">
<path d="M3,2.5 L13,13.5 M13,2.5 L3,13.5" stroke="#8a2a2a" stroke-width="4.4" stroke-linecap="round"/>
<path d="M3,2.5 L13,13.5 M13,2.5 L3,13.5" stroke="#e85a48" stroke-width="2.6" stroke-linecap="round"/></svg>
<svg class="a" style="left:622px;top:385px" width="18" height="18" viewBox="0 0 18 18">
<line x1="9.5" y1="10" x2="14.5" y2="15" stroke="#705020" stroke-width="3.4" stroke-linecap="round"/>
<line x1="9.5" y1="10" x2="14.5" y2="15" stroke="#e0c890" stroke-width="1.6" stroke-linecap="round"/>
<circle cx="6.5" cy="7.5" r="4.3" fill="#a8d0e0" stroke="#4a6a70" stroke-width="1.3"/>
<circle cx="5.5" cy="6.5" r="1.6" fill="#d8f0f8"/></svg>
<svg class="a" style="left:752px;top:386px" width="14" height="16" viewBox="0 0 14 16">
<path d="M9.5,1 L3,8 L9.5,15 L12,13 L6.8,8 L12,3 Z" fill="#2060b0" stroke="#183c78" stroke-width="0.7"/></svg>
<svg class="a" style="left:856px;top:386px" width="14" height="16" viewBox="0 0 14 16">
<path d="M4.5,1 L11,8 L4.5,15 L2,13 L7.2,8 L2,3 Z" fill="#2060b0" stroke="#183c78" stroke-width="0.7"/></svg>
<svg class="a" style="left:832px;top:340px" width="16" height="22" viewBox="0 0 16 22">
<path d="M1.5,1.3 L1.5,17.3 L5.4,14 L7.9,19.4 L10.6,18.3 L8.5,13.5 L12.6,13.5 Z" fill="#fff" stroke="#000" stroke-width="1.1" stroke-linejoin="round"/></svg>
<div class="t b" style="left:474.00px;top:9px;transform:scaleX(0.9700);color:#000;">KAD COACHING</div>
<div class="t b" style="left:587.00px;top:9px;transform:scaleX(1.0089);color:#000;">Versão: 5.08</div>
<div class="t" style="left:16.80px;top:34px;transform:scaleX(0.8484);color:#000;">Cadastros</div>
<div class="t" style="left:73.00px;top:34px;transform:scaleX(0.9063);color:#000;">Venda / Orçamento</div>
<div class="t" style="left:177.60px;top:34px;transform:scaleX(0.8589);color:#000;">Relatórios</div>
<div class="t" style="left:234.40px;top:34px;transform:scaleX(0.8485);color:#000;">Listas</div>
<div class="t" style="left:271.60px;top:34px;transform:scaleX(0.8508);color:#000;">Consultas</div>
<div class="t" style="left:327.60px;top:34px;transform:scaleX(0.8589);color:#000;">Financeiro</div>
<div class="t" style="left:387.00px;top:34px;transform:scaleX(0.8570);color:#000;">Diversos</div>
<div class="t" style="left:437.60px;top:34px;transform:scaleX(0.8589);color:#000;">Help Desk</div>
<div class="t" style="left:497.00px;top:34px;transform:scaleX(0.8778);color:#000;"><u>A</u>rquivo</div>
<div class="t" style="left:543.00px;top:34px;transform:scaleX(0.8612);color:#000;"><u>E</u>ditar</div>
<div class="t" style="left:580.60px;top:34px;transform:scaleX(0.8131);color:#000;">E<u>x</u>ibir</div>
<div class="t" style="left:615.00px;top:34px;transform:scaleX(0.8799);color:#000;"><u>J</u>anela</div>
<div class="t" style="left:656.00px;top:34px;transform:scaleX(0.8705);color:#000;">Ajuda</div>
<div class="t" style="left:694.00px;top:34px;transform:scaleX(0.8922);color:#000;">Backup</div>
<div class="t" style="left:740.60px;top:34px;transform:scaleX(0.8705);color:#000;">SKIN</div>
<div class="t" style="left:10.40px;top:86px;transform:scaleX(0.8622);color:#000;">Transportador</div>
<div class="t" style="left:88.40px;top:86px;transform:scaleX(0.8779);color:#000;">Fornecedores</div>
<div class="t" style="left:177.30px;top:86px;transform:scaleX(0.8786);color:#000;">Contatos</div>
<div class="t" style="left:248.80px;top:87px;transform:scaleX(0.8675);color:#000;">Funcionários</div>
<div class="t" style="left:328.40px;top:87px;transform:scaleX(0.8805);color:#000;">Vendedores</div>
<div class="t" style="left:405.00px;top:87px;transform:scaleX(0.8755);color:#000;">Palestrantes</div>
<div class="t" style="left:492.70px;top:87px;transform:scaleX(0.8456);color:#000;">Palestras</div>
<div class="t" style="left:571.90px;top:87px;transform:scaleX(0.8599);color:#000;">Produtos</div>
<div class="t" style="left:650.80px;top:87px;transform:scaleX(0.8802);color:#000;">Serviços</div>
<div class="t" style="left:731.30px;top:87px;transform:scaleX(0.8465);color:#000;">Clientes</div>
<div class="t" style="left:799.90px;top:87px;transform:scaleX(0.9445);color:#000;">Venda/Serv</div>
<div class="t b" style="left:514.60px;top:345px;transform:scaleX(0.9718);color:#000;">Cadastro contatos</div>
<div class="t" style="left:330.61px;top:389px;transform:scaleX(0.8867);color:#000;">Incluir</div>
<div class="t" style="left:439.60px;top:389px;transform:scaleX(0.8507);color:#8c8c8c;">Gravar</div>
<div class="t" style="left:548.00px;top:389px;transform:scaleX(0.8331);color:#8c8c8c;">Excluir</div>
<div class="t" style="left:647.00px;top:389px;transform:scaleX(0.8801);color:#000;">Procurar</div>
<div class="t b" style="left:586.00px;top:427px;transform:scaleX(1.0072);color:#000;">Tab 0</div>
<div class="t" style="left:312.70px;top:451px;transform:scaleX(0.8422);color:#000;">Codigo</div>
<div class="t" style="left:317.00px;top:471px;transform:scaleX(0.8659);color:#000;">Nome</div>
<div class="t" style="left:298.00px;top:491px;transform:scaleX(0.9149);color:#000;">Telefones</div>
<div class="t" style="left:302.50px;top:511px;transform:scaleX(0.8384);color:#000;">Celulares</div>
<div class="t" style="left:294.20px;top:539px;transform:scaleX(0.8958);color:#000;">Anotações</div>
<div class="t" style="left:625.00px;top:451px;transform:scaleX(0.8282);color:#000;">Email</div>
<div class="t" style="left:631.60px;top:471px;transform:scaleX(0.8427);color:#000;">Site</div>
<div class="t" style="left:616.80px;top:491px;transform:scaleX(0.8474);color:#000;">Cidade</div>
<div class="t" style="left:616.80px;top:511px;transform:scaleX(0.8624);color:#000;">Estado</div>
</body></html>
